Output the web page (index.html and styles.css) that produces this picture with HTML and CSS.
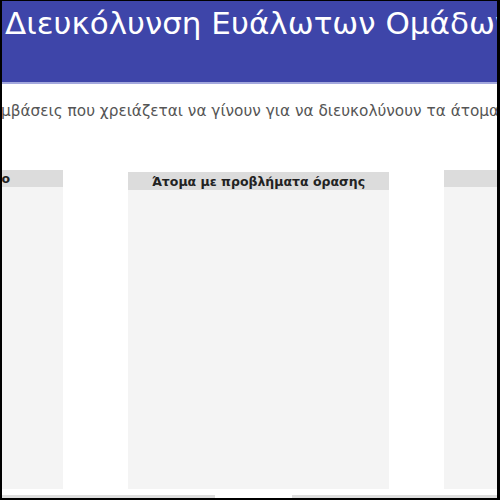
FILE: index.html
```html
<!DOCTYPE html>
<html lang="el">
<head>
<meta charset="utf-8">
<title>Διευκόλυνση Ευάλωτων Ομάδων</title>
<link rel="stylesheet" href="styles.css">
</head>
<body>
<div class="page">
  <header class="header">
    <h1 class="title">Διευκόλυνση Ευάλωτων Ομάδων</h1>
  </header>
  <p class="intro">μβάσεις που χρειάζεται να γίνουν για να διευκολύνουν τα άτομα</p>
  <div class="cols">
    <section class="col col-first">
      <h2 class="col-head">Άτομα σε αμαξίδιο</h2>
      <div class="col-body"></div>
    </section>
    <section class="col col-mid">
      <h2 class="col-head">Άτομα με προβλήματα όρασης</h2>
      <div class="col-body"></div>
    </section>
    <section class="col col-last">
      <h2 class="col-head"></h2>
      <div class="col-body"></div>
    </section>
  </div>
  <div class="spacer"></div>
  <div class="hscroll"><div class="hscroll-gap"></div></div>
</div>
</body>
</html>
```
FILE: styles.css
```css
* { box-sizing: border-box; }
html, body { margin: 0; padding: 0; }
body {
  width: 500px;
  height: 500px;
  overflow: hidden;
  background: #000;
}
.page {
  width: 500px;
  height: 500px;
  border-style: solid;
  border-color: #000;
  border-width: 1px 3px 2px 2px;
  background: #fff;
  overflow: hidden;
  display: flex;
  flex-direction: column;
  font-family: "DejaVu Sans", Verdana, sans-serif;
}
.header {
  flex: none;
  height: 83px;
  background: #3e45a9;
  border-bottom: 2px solid #a3a8dd;
  padding: 4px 0 0 3px;
  overflow: hidden;
}
.title {
  margin: 0;
  font-size: 31px;
  line-height: 37px;
  font-weight: normal;
  color: #fff;
  white-space: nowrap;
}
.intro {
  flex: none;
  margin: 17px 0 0 -1px;
  height: 20px;
  font-size: 15.3px;
  line-height: 20px;
  color: #555;
  white-space: nowrap;
  overflow: hidden;
}
.cols {
  flex: none;
  height: 319px;
  margin-top: 49px;
  display: flex;
  align-items: stretch;
}
.col {
  flex: none;
  width: 261px;
  display: flex;
  flex-direction: column;
  background: #f4f4f4;
}
.col-first { margin-left: -200px; }
.col-mid { margin-left: 65px; margin-top: 2px; }
.col-last { margin-left: 55px; }
.col-head {
  flex: none;
  margin: 0;
  height: 17px;
  background: #dcdcdc;
  font-size: 12.5px;
  line-height: 17px;
  font-weight: bold;
  color: #222;
  text-align: center;
  white-space: nowrap;
  overflow: hidden;
}
.col-first .col-head { text-align: right; padding-right: 53px; }
.col-mid .col-head { height: 18px; line-height: 19px; }
.col-body { flex: 1; }
.spacer { flex: none; height: 6px; }
.hscroll {
  flex: none;
  height: 3px;
  background: #dedede;
  display: flex;
  padding-left: 213px;
}
.hscroll-gap {
  width: 77px;
  background: #fff;
}
```
